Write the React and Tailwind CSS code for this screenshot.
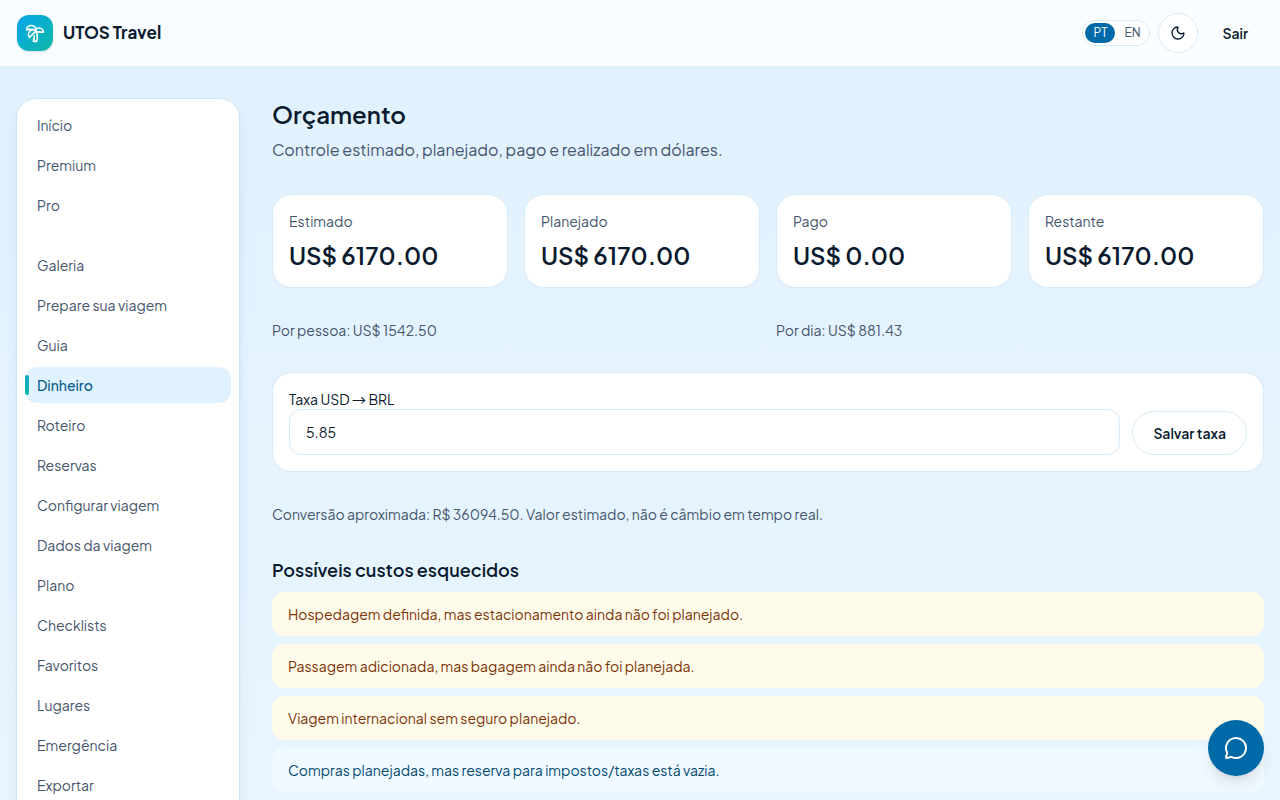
import { useState } from "react"
import { MessageCircle, Moon, TreePalm } from "lucide-react"

const menu = [
  ["Início", "Premium", "Pro"],
  [
    "Galeria",
    "Prepare sua viagem",
    "Guia",
    "Dinheiro",
    "Roteiro",
    "Reservas",
    "Configurar viagem",
    "Dados da viagem",
    "Plano",
    "Checklists",
    "Favoritos",
    "Lugares",
    "Emergência",
    "Exportar",
  ],
]

const resumo = [
  { nome: "Estimado", valor: "US$ 6170.00" },
  { nome: "Planejado", valor: "US$ 6170.00" },
  { nome: "Pago", valor: "US$ 0.00" },
  { nome: "Restante", valor: "US$ 6170.00" },
]

const alertas = [
  { texto: "Hospedagem definida, mas estacionamento ainda não foi planejado.", tipo: "aviso" },
  { texto: "Passagem adicionada, mas bagagem ainda não foi planejada.", tipo: "aviso" },
  { texto: "Viagem internacional sem seguro planejado.", tipo: "aviso" },
  { texto: "Compras planejadas, mas reserva para impostos/taxas está vazia.", tipo: "info" },
]

function Header() {
  const [idioma, setIdioma] = useState("PT")

  return (
    <header className="flex h-[66px] shrink-0 items-center justify-between bg-[#f9fdff] px-4">
      <a href="#" className="flex items-center gap-2.5 pl-px">
        <span className="flex size-9 items-center justify-center rounded-xl bg-gradient-to-br from-[#0ea5e9] to-[#14b8a6] text-white shadow-sm">
          <TreePalm size={20} />
        </span>
        <span className="text-[17px] font-bold">UTOS Travel</span>
      </a>

      <div className="flex items-center gap-2">
        <div className="flex gap-0.5 rounded-full border border-[#dcebf7] bg-white p-0.5 text-xs">
          {["PT", "EN"].map((sigla) => (
            <button
              key={sigla}
              onClick={() => setIdioma(sigla)}
              className={`h-5 w-[30px] rounded-full ${
                idioma === sigla ? "bg-sky-700 text-white" : "text-slate-600"
              }`}
            >
              {sigla}
            </button>
          ))}
        </div>
        <button
          aria-label="Tema escuro"
          className="flex size-10 items-center justify-center rounded-full border border-[#dcebf7] bg-white"
        >
          <Moon size={16} />
        </button>
        <button className="h-10 px-4 text-sm font-semibold">Sair</button>
      </div>
    </header>
  )
}

function Sidebar() {
  return (
    <aside className="w-56 shrink-0 self-start rounded-[20px] border border-[#cfe2f2] bg-white px-2 pt-2 pb-12 shadow-lg shadow-sky-900/10">
      <nav className="flex flex-col gap-6">
        {menu.map((grupo, i) => (
          <ul key={i} className="flex flex-col gap-1">
            {grupo.map((item) => (
              <li key={item}>
                {item === "Dinheiro" ? (
                  <a
                    href="#"
                    aria-current="page"
                    className="relative flex h-9 items-center rounded-xl bg-[#e0f1ff] px-3 text-sm font-medium text-sky-800"
                  >
                    <span className="absolute left-0 h-5 w-1 rounded-full bg-gradient-to-b from-[#12a9c9] to-[#14b8a6]" />
                    {item}
                  </a>
                ) : (
                  <a href="#" className="flex h-9 items-center rounded-xl px-3 text-sm text-slate-600">
                    {item}
                  </a>
                )}
              </li>
            ))}
          </ul>
        ))}
      </nav>
    </aside>
  )
}

export default function App() {
  const [taxa, setTaxa] = useState("5.85")

  return (
    <div className="flex h-screen flex-col overflow-hidden bg-gradient-to-b from-[#e0f1fe] to-[#e8f5ff] font-['Plus_Jakarta_Sans',Inter,sans-serif] text-[#0b1b2f]">
      <Header />

      <div className="flex min-h-0 flex-1 gap-8 overflow-hidden px-4 pt-8">
        <Sidebar />

        <main className="flex min-w-0 flex-1 flex-col gap-8">
          <div>
            <h1 className="text-2xl leading-8 font-semibold">Orçamento</h1>
            <p className="mt-2 text-base leading-6 text-slate-600">
              Controle estimado, planejado, pago e realizado em dólares.
            </p>
          </div>

          {/* RESUMO */}
          <div className="grid grid-cols-4 gap-4">
            {resumo.map((card) => (
              <div key={card.nome} className="rounded-[20px] border border-[#d9ebf8] bg-white p-4">
                <p className="text-sm leading-5 text-slate-600">{card.nome}</p>
                <p className="mt-2 text-2xl leading-8 font-semibold">{card.valor}</p>
              </div>
            ))}
          </div>

          <div className="grid grid-cols-2 gap-4 text-sm leading-5 text-slate-600">
            <p>Por pessoa: US$ 1542.50</p>
            <p>Por dia: US$ 881.43</p>
          </div>

          {/* TAXA */}
          <form
            onSubmit={(e) => e.preventDefault()}
            className="flex items-end gap-3 rounded-[20px] border border-[#d9ebf8] bg-white p-4"
          >
            <div className="flex flex-1 flex-col">
              <label htmlFor="taxa" className="text-sm leading-5">
                Taxa USD <span className="font-['Noto_Sans_CJK_JP'] leading-none">→</span> BRL
              </label>
              <input
                id="taxa"
                value={taxa}
                onChange={(e) => setTaxa(e.target.value)}
                className="h-[46px] w-full rounded-xl border border-[#d9ebf8] bg-white px-4 text-sm"
              />
            </div>
            <button className="h-11 rounded-full border border-[#d9ebf8] bg-white px-5 text-sm font-semibold">
              Salvar taxa
            </button>
          </form>

          <p className="text-sm leading-5 text-slate-600">
            Conversão aproximada: R$ 36094.50. Valor estimado, não é câmbio em tempo real.
          </p>

          {/* ALERTAS */}
          <section>
            <h2 className="mb-2 text-lg leading-7 font-semibold">Possíveis custos esquecidos</h2>
            <ul className="flex flex-col gap-2 text-sm leading-5">
              {alertas.map((alerta) => (
                <li
                  key={alerta.texto}
                  className={`rounded-xl px-4 py-3 ${
                    alerta.tipo === "aviso" ? "bg-[#fffbeb] text-[#7b3306]" : "bg-[#f0f9ff] text-[#024a70]"
                  }`}
                >
                  {alerta.texto}
                </li>
              ))}
            </ul>
          </section>
        </main>
      </div>

      <button
        aria-label="Abrir chat"
        className="fixed right-4 bottom-6 flex size-14 items-center justify-center rounded-full bg-sky-700 text-white shadow-lg"
      >
        <MessageCircle size={24} />
      </button>
    </div>
  )
}
